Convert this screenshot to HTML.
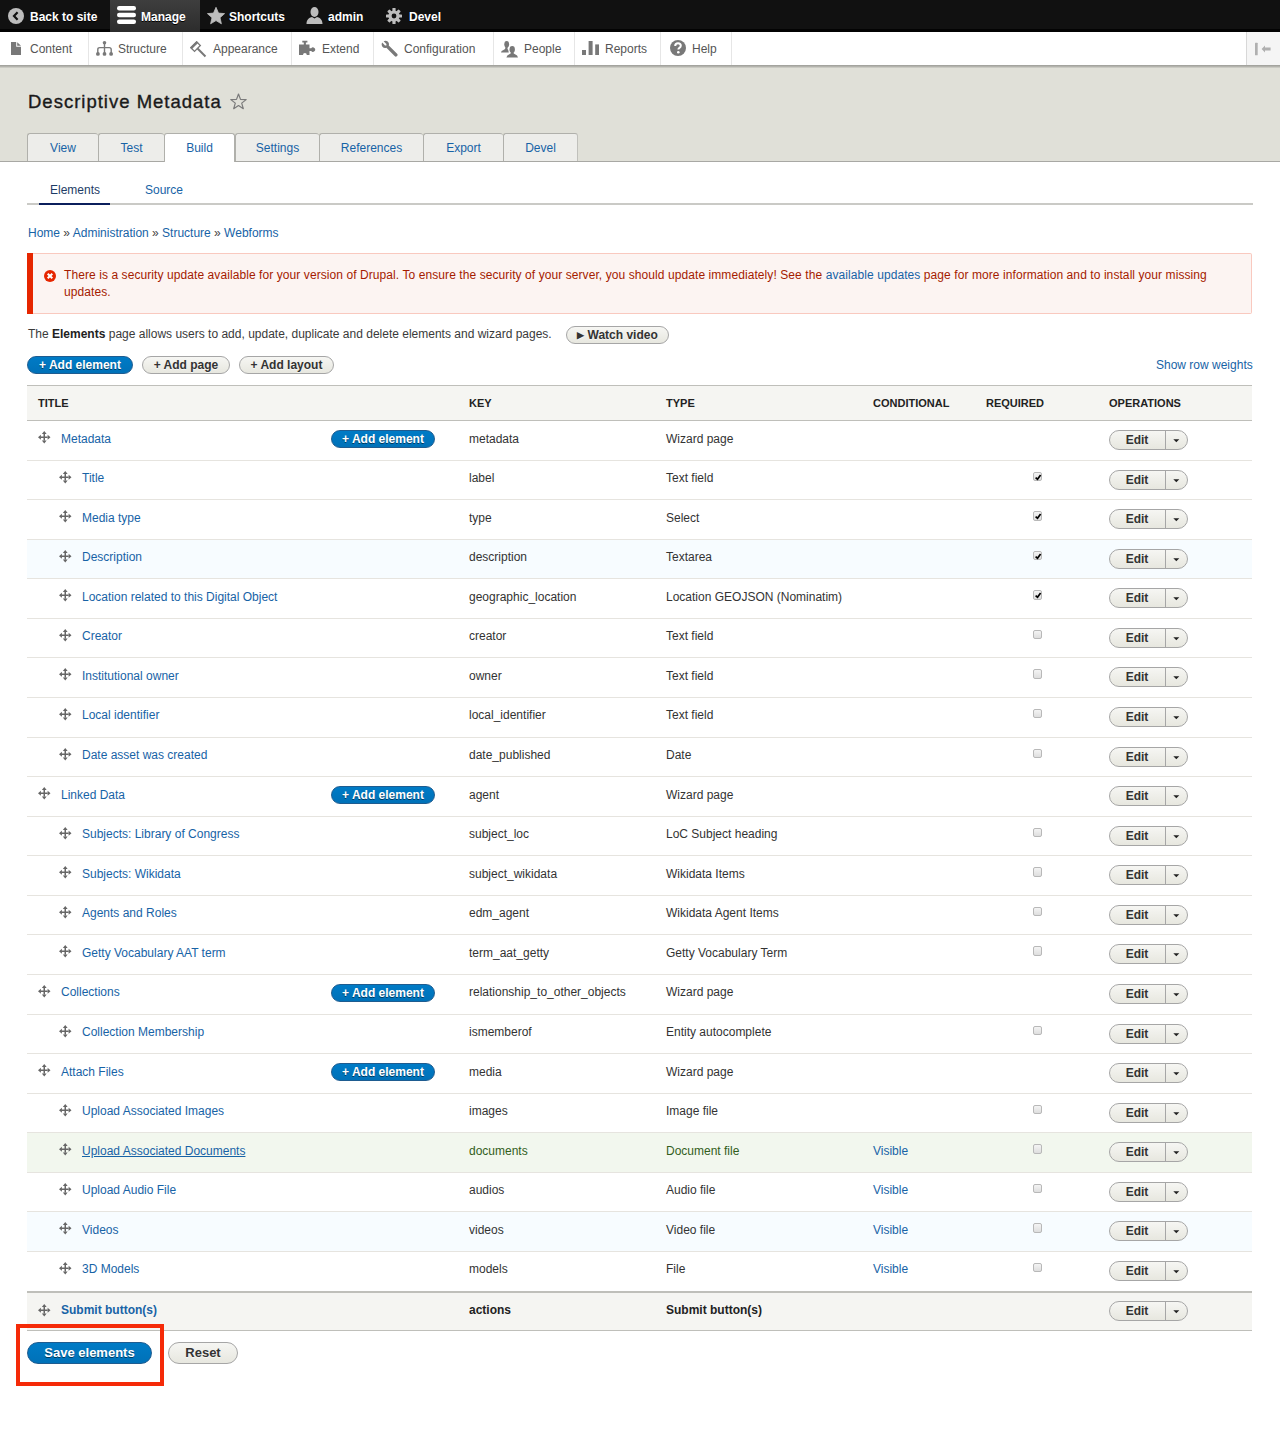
<!DOCTYPE html>
<html><head><meta charset="utf-8">
<style>
*{box-sizing:border-box;margin:0;padding:0}
html,body{width:1280px;height:1444px;overflow:hidden;background:#fff}
body{font-family:"Liberation Sans",sans-serif;font-size:13px;color:#222;position:relative}
a{color:#1763a6;text-decoration:none}
.a{position:absolute;white-space:nowrap;line-height:20px}
/* toolbar */
#bar{position:absolute;left:0;top:0;width:1280px;height:32px;background:#111;border-bottom:3px solid #030303}
#bar .tx{position:absolute;top:7px;color:#fff;font-weight:bold;font-size:12px;line-height:20px;text-shadow:0 1px 0 #000}
#bar svg{position:absolute}
#manage{position:absolute;left:110px;top:0;width:90px;height:32px;background:linear-gradient(#3e3e3e,#2c2c2c)}
#tray{position:absolute;left:0;top:32px;width:1280px;height:33px;background:#fff}
#trsh{position:absolute;left:0;top:65px;width:1280px;height:3px;background:linear-gradient(#9c9c97,#b3b3ad 50%,#d6d6ce)}
#tray .sep{position:absolute;top:0;width:1px;height:33px;background:#e6e6e6}
#tray .tx{position:absolute;top:7px;color:#555;font-size:12px;line-height:20px}
#tray svg{position:absolute}
/* header */
#hdr{position:absolute;left:0;top:66px;width:1280px;height:95px;background:#e0e0d8}
#hdrline{position:absolute;left:0;top:161px;width:1280px;height:1px;background:#a8a8a4}
h1{position:absolute;left:28px;top:90px;font-size:18.5px;letter-spacing:1px;font-weight:normal;color:#1a1a1a;line-height:24px;white-space:nowrap;-webkit-text-stroke:0.35px #1a1a1a}
.ptab{position:absolute;top:133px;height:28px;background:#ededea;border:1px solid #b0b0ab;border-bottom:none;border-right:none;border-radius:3px 3px 0 0;text-align:center;line-height:28px;color:#1763a6;font-size:12px}
.ptab.act{background:#fff;height:29px;border-right:1px solid #b0b0ab}
/* secondary tabs */
#stline{position:absolute;left:27px;top:203px;width:1226px;height:2px;background:#cacac6}
#stact{position:absolute;left:39px;top:202.5px;width:71px;height:2px;background:#0b1f5c}
/* message */
#msg{position:absolute;left:33px;top:253px;width:1219px;height:61px;background:#fcf4f2;border:1px solid #f9c9bf;border-left:none;border-radius:0 2px 2px 0}
#msgbar{position:absolute;left:27px;top:253px;width:6px;height:61px;background:#e62600}
#msgtx{position:absolute;left:64px;top:267px;width:1170px;color:#a51b00;line-height:17px;font-size:12px;letter-spacing:0.08px}
/* buttons */
.btn{position:absolute;height:18px;border-radius:20em;border:1px solid #a6a6a6;background:linear-gradient(#f6f6f3,#e7e7df);color:#333;font-weight:bold;font-size:12px;line-height:16px;text-align:center;white-space:nowrap;text-shadow:0 1px rgba(255,255,255,.6)}
.btn.pri{background:linear-gradient(#007bc6,#0071b8);border-color:#1e5c90;color:#fff;text-shadow:0 1px rgba(0,0,0,.5)}
/* table */
#thead{position:absolute;left:27px;top:385px;width:1225px;height:36px;background:#f5f5f2;border-top:1px solid #bfbfba;border-bottom:1px solid #bfbfba}
#thead span{position:absolute;top:7px;margin-left:1px;font-weight:bold;font-size:11px;line-height:20px;color:#222;text-transform:uppercase}
.row{position:absolute;left:27px;width:1225px;height:39.57px;border-bottom:1px solid #e6e4df}
.row .dg{position:absolute;top:10px;width:13px;height:13px}
.row .dg svg{display:block}
.row .tt,.row .k,.row .ty,.row .cd{position:absolute;top:7.5px;line-height:20px;white-space:nowrap;font-size:12px}
.row .k{left:442px;color:#333}
.row .ty{left:639px;color:#333}
.row .cd{left:846px}
.cb{position:absolute;left:1005.5px;width:9.5px;height:9.5px;border:1px solid #b8b8b8;border-radius:2px;background:linear-gradient(#f4f4f4,#dedede)}
.eb{position:absolute;left:1082px;width:79px;height:20px;border:1px solid #a6a6a6;border-radius:20em;background:linear-gradient(#f6f6f3,#e7e7df)}
.eb .el{position:absolute;left:0;top:0;width:54px;text-align:center;line-height:18px;font-weight:bold;font-size:12px;color:#333}
.eb .ed{position:absolute;left:54.5px;top:0;width:1px;height:18px;background:#a6a6a6}
.eb .caret{position:absolute;left:62.5px;top:8px}
#tfoot{position:absolute;left:27px;top:1290.5px;width:1225px;height:40.5px;background:#f5f5f2;border-top:2px solid #bfbfba;border-bottom:1px solid #bfbfba}
</style></head>
<body>
<div id="bar">
  <svg style="left:8px;top:8px" width="16" height="16" viewBox="0 0 16 16"><circle cx="8" cy="8" r="8" fill="#bdbdbd"/><path d="M9.6 4.2 L6 8 L9.6 11.8" stroke="#111" stroke-width="2.2" fill="none"/></svg>
  <span class="tx" style="left:30px">Back to site</span>
  <div id="manage"></div>
  <svg style="left:117px;top:6px" width="19" height="18" viewBox="0 0 19 18"><rect x="0" y="0" width="19" height="4.5" rx="2.2" fill="#fff"/><rect x="0" y="6.7" width="19" height="4.5" rx="2.2" fill="#fff"/><rect x="0" y="13.4" width="19" height="4.5" rx="2.2" fill="#fff"/></svg>
  <span class="tx" style="left:141px">Manage</span>
  <svg style="left:207px;top:7px" width="18" height="18" viewBox="0 0 18 18"><path d="M9 0.3 L11.5 6.1 L17.6 6.6 L13 10.7 L14.4 16.8 L9 13.6 L3.6 16.8 L5 10.7 L0.4 6.6 L6.5 6.1 Z" fill="#bdbdbd" stroke="#bdbdbd" stroke-width="0.8" stroke-linejoin="round"/></svg>
  <span class="tx" style="left:229px">Shortcuts</span>
  <svg style="left:306px;top:7px" width="17" height="17" viewBox="0 0 17 17"><ellipse cx="8.5" cy="5" rx="4" ry="5" fill="#bdbdbd"/><path d="M0.5 17 C0.5 12 4 10.5 6 10 L8.5 11.5 L11 10 C13 10.5 16.5 12 16.5 17 Z" fill="#bdbdbd"/></svg>
  <span class="tx" style="left:328px">admin</span>
  <svg style="left:386px;top:8px" width="16" height="16" viewBox="0 0 16 16"><g fill="#bdbdbd"><circle cx="8" cy="8" r="5.6"/><rect x="6.4" y="0" width="3.2" height="16" rx="0.6"/><rect x="0" y="6.4" width="16" height="3.2" rx="0.6"/><rect x="6.4" y="0" width="3.2" height="16" rx="0.6" transform="rotate(45 8 8)"/><rect x="6.4" y="0" width="3.2" height="16" rx="0.6" transform="rotate(-45 8 8)"/></g><circle cx="8" cy="8" r="2.4" fill="#111"/></svg>
  <span class="tx" style="left:409px">Devel</span>
</div>
<div id="tray">
  <div class="sep" style="left:88px"></div>
  <div class="sep" style="left:182px"></div>
  <div class="sep" style="left:291px"></div>
  <div class="sep" style="left:373px"></div>
  <div class="sep" style="left:493px"></div>
  <div class="sep" style="left:574px"></div>
  <div class="sep" style="left:660px"></div>
  <div class="sep" style="left:731px"></div>
  <div class="sep" style="left:1246px;background:#d8d8d8"></div>
  <div style="position:absolute;left:1247px;top:0;width:33px;height:33px;background:#f5f5f5"></div>
  <svg style="left:1255px;top:10px" width="16" height="14" viewBox="0 0 16 14"><rect x="0" y="0.7" width="2.7" height="12.5" rx="0.5" fill="#b0b0b0"/><path d="M6.6 6.9 L10 3.4 V5.4 H15.6 V8.6 H10 V10.4 Z" fill="#b0b0b0"/></svg>
  <!-- content icon -->
  <svg style="left:11px;top:10px" width="10" height="13" viewBox="0 0 10 13"><path d="M0 0 H5.2 V4.8 H10 V13 H0 Z M6.2 0.2 L10 3.8 H6.2 Z" fill="#787878"/></svg>
  <span class="tx" style="left:30px">Content</span>
  <svg style="left:96px;top:9px" width="17" height="15" viewBox="0 0 17 15"><g fill="#787878"><circle cx="8.5" cy="1.8" r="1.8"/><rect x="7.8" y="1.8" width="1.4" height="11"/><path d="M1.8 13 V8.5 Q1.8 6.6 3.8 6.6 H13.2 Q15.2 6.6 15.2 8.5 V13" stroke="#787878" stroke-width="1.4" fill="none"/><circle cx="1.9" cy="12.9" r="1.9"/><circle cx="8.5" cy="12.9" r="1.9"/><circle cx="15.1" cy="12.9" r="1.9"/></g></svg>
  <span class="tx" style="left:118px">Structure</span>
  <svg style="left:189px;top:8px" width="18" height="18" viewBox="0 0 18 18"><g transform="rotate(-45 6.6 6.6)"><rect x="2.5" y="4" width="8.2" height="5.2" fill="#fff" stroke="#787878" stroke-width="1.3"/><rect x="1.9" y="3.3" width="9.4" height="2.5" fill="#787878"/><rect x="5.6" y="9" width="2" height="11.6" fill="#787878"/></g></svg>
  <span class="tx" style="left:213px">Appearance</span>
  <svg style="left:299px;top:8px" width="17" height="16" viewBox="0 0 17 16"><path d="M3.3 0.7 H8.4 V2.4 H6.9 V4.4 H10.5 V8.3 H12.2 A2.2 2.2 0 1 1 12.2 11.1 H10.5 V15 H7.8 A1.9 1.9 0 0 0 4 15 H0 V4.4 H4.8 V2.4 H3.3 Z" fill="#787878"/></svg>
  <span class="tx" style="left:322px">Extend</span>
  <svg style="left:381px;top:8px" width="17" height="17" viewBox="0 0 17 17"><g transform="translate(17 0) scale(-1 1)"><path d="M15.8 2.6 L13 5.4 L11.6 5.4 L11.6 4 L14.4 1.2 Q12.3 0 10.3 1.4 Q8.5 3 9.2 5.4 L0.9 13.7 Q-0.2 15 1 16.1 Q2.2 17.2 3.4 16 L11.6 7.8 Q14 8.6 15.6 6.7 Q17 4.8 15.8 2.6 Z" fill="#787878"/></g></svg>
  <span class="tx" style="left:404px">Configuration</span>
  <svg style="left:500px;top:8px" width="19" height="18" viewBox="0 0 19 18"><g fill="#787878"><ellipse cx="6.7" cy="4.3" rx="2.4" ry="3.4"/><path d="M5.6 6.5 H7.6 Q7.2 9 8.2 10 L8.8 12.5 H1 Q1 10.5 3.5 10 Q5.6 9.6 5.6 6.5 Z"/><ellipse cx="12.2" cy="9.4" rx="2.7" ry="3.4"/><path d="M11 11.5 H13.4 Q13.2 13.6 15 14.3 Q17.6 15 18 17.5 H6.4 Q6.8 15 9.4 14.3 Q11.2 13.6 11 11.5 Z"/></g></svg>
  <span class="tx" style="left:524px">People</span>
  <svg style="left:582px;top:8px" width="17" height="16" viewBox="0 0 17 16"><g fill="#787878"><rect x="0" y="10" width="4" height="5"/><rect x="6.6" y="1" width="4" height="14"/><rect x="13.2" y="4.4" width="3.8" height="10.6"/></g></svg>
  <span class="tx" style="left:605px">Reports</span>
  <svg style="left:670px;top:8px" width="16" height="16" viewBox="0 0 16 16"><circle cx="8" cy="8" r="8" fill="#787878"/><path d="M5.2 6 Q5.2 3.3 8 3.3 Q10.8 3.3 10.8 5.8 Q10.8 7.2 9.2 8 Q8.4 8.5 8.4 9.6" stroke="#fff" stroke-width="2" fill="none"/><circle cx="8.3" cy="12.3" r="1.3" fill="#fff"/></svg>
  <span class="tx" style="left:692px">Help</span>
</div>
<div id="hdr"></div>
<div id="trsh"></div>
<div id="hdrline"></div>
<h1>Descriptive Metadata</h1>
<svg style="position:absolute;left:230px;top:93px" width="17" height="17" viewBox="0 0 17 17"><path d="M8.5 1 L10.5 6.4 L16.2 6.6 L11.7 10.1 L13.3 15.7 L8.5 12.5 L3.7 15.7 L5.3 10.1 L0.8 6.6 L6.5 6.4 Z" fill="none" stroke="#7a7a7a" stroke-width="1.2" stroke-linejoin="round"/></svg>
<div class="ptab" style="left:27px;width:71px">View</div>
<div class="ptab" style="left:98px;width:66px">Test</div>
<div class="ptab act" style="left:164px;width:71px">Build</div>
<div class="ptab" style="left:235px;width:84px">Settings</div>
<div class="ptab" style="left:319px;width:104px">References</div>
<div class="ptab" style="left:423px;width:80px">Export</div>
<div class="ptab" style="left:503px;width:75px;border-right:1px solid #c0c0bb">Devel</div>

<a class="a" style="left:50px;top:180px;color:#1d3c66;font-size:12px">Elements</a>
<a class="a" style="left:145px;top:180px;font-size:12px">Source</a>
<div id="stline"></div>
<div id="stact"></div>

<div class="a" style="left:28px;top:223px;font-size:12px;color:#444"><a>Home</a> » <a>Administration</a> » <a>Structure</a> » <a>Webforms</a></div>

<div id="msgbar"></div>
<div id="msg"></div>
<svg style="position:absolute;left:43.5px;top:269.5px" width="12" height="12" viewBox="0 0 12 12"><circle cx="6" cy="6" r="6" fill="#e62600"/><path d="M3.7 3.7 L8.3 8.3 M8.3 3.7 L3.7 8.3" stroke="#fff" stroke-width="2"/></svg>
<div id="msgtx">There is a security update available for your version of Drupal. To ensure the security of your server, you should update immediately! See the <a>available updates</a> page for more information and to install your missing updates.</div>

<div class="a" style="left:28px;top:324px;font-size:12px;color:#3a3a3a">The <b style="color:#222">Elements</b> page allows users to add, update, duplicate and delete elements and wizard pages.</div>
<div class="btn" style="left:566px;top:326px;width:103px"><span style="font-size:9px;position:relative;top:-1px">&#9654;</span> Watch video</div>

<div class="btn pri" style="left:27px;top:356px;width:106px">+ Add element</div>
<div class="btn" style="left:142px;top:356px;width:88px">+ Add page</div>
<div class="btn" style="left:239px;top:356px;width:95px">+ Add layout</div>
<a class="a" style="left:1156px;top:355px;font-size:12px">Show row weights</a>

<div id="thead">
  <span style="left:10px">Title</span>
  <span style="left:441px">Key</span>
  <span style="left:638px">Type</span>
  <span style="left:845px">Conditional</span>
  <span style="left:958px">Required</span>
  <span style="left:1081px">Operations</span>
</div>
<div class="row" style="top:421.0px;"><div class="dg" style="left:11px"><svg width="13" height="13" viewBox="0 0 13 13"><g fill="#666"><rect x="5.5" y="2.4" width="1.5" height="7.2"/><rect x="2.4" y="5.5" width="7.2" height="1.5"/><path d="M6.25 0 L8.65 2.9 H3.85 Z M6.25 12.5 L8.65 9.6 H3.85 Z M0 6.25 L2.9 3.85 V8.65 Z M12.5 6.25 L9.6 3.85 V8.65 Z"/></g></svg></div><a class="tt" style="left:34px">Metadata</a><div class="btn pri sm" style="left:304px;top:9px;width:104px">+ Add element</div><span class="k">metadata</span><span class="ty">Wizard page</span><div class="eb" style="top:9px"><span class="el">Edit</span><span class="ed"></span><svg class="caret" width="7" height="4" viewBox="0 0 7 4"><path d="M0.3 0.2H6.3L3.3 3.2Z" fill="#222"/></svg></div></div>
<div class="row" style="top:460.57px;"><div class="dg" style="left:32px"><svg width="13" height="13" viewBox="0 0 13 13"><g fill="#666"><rect x="5.5" y="2.4" width="1.5" height="7.2"/><rect x="2.4" y="5.5" width="7.2" height="1.5"/><path d="M6.25 0 L8.65 2.9 H3.85 Z M6.25 12.5 L8.65 9.6 H3.85 Z M0 6.25 L2.9 3.85 V8.65 Z M12.5 6.25 L9.6 3.85 V8.65 Z"/></g></svg></div><a class="tt" style="left:55px">Title</a><span class="k">label</span><span class="ty">Text field</span><div class="cb" style="top:11px"><svg width="9" height="9" viewBox="0 0 9 9" style="position:absolute;left:0;top:0"><path d="M1.6 4.6 L3.5 6.2 L6.6 2.0" stroke="#000" stroke-width="1.7" fill="none"/></svg></div><div class="eb" style="top:9px"><span class="el">Edit</span><span class="ed"></span><svg class="caret" width="7" height="4" viewBox="0 0 7 4"><path d="M0.3 0.2H6.3L3.3 3.2Z" fill="#222"/></svg></div></div>
<div class="row" style="top:500.14px;"><div class="dg" style="left:32px"><svg width="13" height="13" viewBox="0 0 13 13"><g fill="#666"><rect x="5.5" y="2.4" width="1.5" height="7.2"/><rect x="2.4" y="5.5" width="7.2" height="1.5"/><path d="M6.25 0 L8.65 2.9 H3.85 Z M6.25 12.5 L8.65 9.6 H3.85 Z M0 6.25 L2.9 3.85 V8.65 Z M12.5 6.25 L9.6 3.85 V8.65 Z"/></g></svg></div><a class="tt" style="left:55px">Media type</a><span class="k">type</span><span class="ty">Select</span><div class="cb" style="top:11px"><svg width="9" height="9" viewBox="0 0 9 9" style="position:absolute;left:0;top:0"><path d="M1.6 4.6 L3.5 6.2 L6.6 2.0" stroke="#000" stroke-width="1.7" fill="none"/></svg></div><div class="eb" style="top:9px"><span class="el">Edit</span><span class="ed"></span><svg class="caret" width="7" height="4" viewBox="0 0 7 4"><path d="M0.3 0.2H6.3L3.3 3.2Z" fill="#222"/></svg></div></div>
<div class="row" style="top:539.71px;background:#f7fcff;"><div class="dg" style="left:32px"><svg width="13" height="13" viewBox="0 0 13 13"><g fill="#666"><rect x="5.5" y="2.4" width="1.5" height="7.2"/><rect x="2.4" y="5.5" width="7.2" height="1.5"/><path d="M6.25 0 L8.65 2.9 H3.85 Z M6.25 12.5 L8.65 9.6 H3.85 Z M0 6.25 L2.9 3.85 V8.65 Z M12.5 6.25 L9.6 3.85 V8.65 Z"/></g></svg></div><a class="tt" style="left:55px">Description</a><span class="k">description</span><span class="ty">Textarea</span><div class="cb" style="top:11px"><svg width="9" height="9" viewBox="0 0 9 9" style="position:absolute;left:0;top:0"><path d="M1.6 4.6 L3.5 6.2 L6.6 2.0" stroke="#000" stroke-width="1.7" fill="none"/></svg></div><div class="eb" style="top:9px"><span class="el">Edit</span><span class="ed"></span><svg class="caret" width="7" height="4" viewBox="0 0 7 4"><path d="M0.3 0.2H6.3L3.3 3.2Z" fill="#222"/></svg></div></div>
<div class="row" style="top:579.28px;"><div class="dg" style="left:32px"><svg width="13" height="13" viewBox="0 0 13 13"><g fill="#666"><rect x="5.5" y="2.4" width="1.5" height="7.2"/><rect x="2.4" y="5.5" width="7.2" height="1.5"/><path d="M6.25 0 L8.65 2.9 H3.85 Z M6.25 12.5 L8.65 9.6 H3.85 Z M0 6.25 L2.9 3.85 V8.65 Z M12.5 6.25 L9.6 3.85 V8.65 Z"/></g></svg></div><a class="tt" style="left:55px">Location related to this Digital Object</a><span class="k">geographic_location</span><span class="ty">Location GEOJSON (Nominatim)</span><div class="cb" style="top:11px"><svg width="9" height="9" viewBox="0 0 9 9" style="position:absolute;left:0;top:0"><path d="M1.6 4.6 L3.5 6.2 L6.6 2.0" stroke="#000" stroke-width="1.7" fill="none"/></svg></div><div class="eb" style="top:9px"><span class="el">Edit</span><span class="ed"></span><svg class="caret" width="7" height="4" viewBox="0 0 7 4"><path d="M0.3 0.2H6.3L3.3 3.2Z" fill="#222"/></svg></div></div>
<div class="row" style="top:618.85px;"><div class="dg" style="left:32px"><svg width="13" height="13" viewBox="0 0 13 13"><g fill="#666"><rect x="5.5" y="2.4" width="1.5" height="7.2"/><rect x="2.4" y="5.5" width="7.2" height="1.5"/><path d="M6.25 0 L8.65 2.9 H3.85 Z M6.25 12.5 L8.65 9.6 H3.85 Z M0 6.25 L2.9 3.85 V8.65 Z M12.5 6.25 L9.6 3.85 V8.65 Z"/></g></svg></div><a class="tt" style="left:55px">Creator</a><span class="k">creator</span><span class="ty">Text field</span><div class="cb" style="top:11px"></div><div class="eb" style="top:9px"><span class="el">Edit</span><span class="ed"></span><svg class="caret" width="7" height="4" viewBox="0 0 7 4"><path d="M0.3 0.2H6.3L3.3 3.2Z" fill="#222"/></svg></div></div>
<div class="row" style="top:658.4200000000001px;"><div class="dg" style="left:32px"><svg width="13" height="13" viewBox="0 0 13 13"><g fill="#666"><rect x="5.5" y="2.4" width="1.5" height="7.2"/><rect x="2.4" y="5.5" width="7.2" height="1.5"/><path d="M6.25 0 L8.65 2.9 H3.85 Z M6.25 12.5 L8.65 9.6 H3.85 Z M0 6.25 L2.9 3.85 V8.65 Z M12.5 6.25 L9.6 3.85 V8.65 Z"/></g></svg></div><a class="tt" style="left:55px">Institutional owner</a><span class="k">owner</span><span class="ty">Text field</span><div class="cb" style="top:11px"></div><div class="eb" style="top:9px"><span class="el">Edit</span><span class="ed"></span><svg class="caret" width="7" height="4" viewBox="0 0 7 4"><path d="M0.3 0.2H6.3L3.3 3.2Z" fill="#222"/></svg></div></div>
<div class="row" style="top:697.99px;"><div class="dg" style="left:32px"><svg width="13" height="13" viewBox="0 0 13 13"><g fill="#666"><rect x="5.5" y="2.4" width="1.5" height="7.2"/><rect x="2.4" y="5.5" width="7.2" height="1.5"/><path d="M6.25 0 L8.65 2.9 H3.85 Z M6.25 12.5 L8.65 9.6 H3.85 Z M0 6.25 L2.9 3.85 V8.65 Z M12.5 6.25 L9.6 3.85 V8.65 Z"/></g></svg></div><a class="tt" style="left:55px">Local identifier</a><span class="k">local_identifier</span><span class="ty">Text field</span><div class="cb" style="top:11px"></div><div class="eb" style="top:9px"><span class="el">Edit</span><span class="ed"></span><svg class="caret" width="7" height="4" viewBox="0 0 7 4"><path d="M0.3 0.2H6.3L3.3 3.2Z" fill="#222"/></svg></div></div>
<div class="row" style="top:737.56px;"><div class="dg" style="left:32px"><svg width="13" height="13" viewBox="0 0 13 13"><g fill="#666"><rect x="5.5" y="2.4" width="1.5" height="7.2"/><rect x="2.4" y="5.5" width="7.2" height="1.5"/><path d="M6.25 0 L8.65 2.9 H3.85 Z M6.25 12.5 L8.65 9.6 H3.85 Z M0 6.25 L2.9 3.85 V8.65 Z M12.5 6.25 L9.6 3.85 V8.65 Z"/></g></svg></div><a class="tt" style="left:55px">Date asset was created</a><span class="k">date_published</span><span class="ty">Date</span><div class="cb" style="top:11px"></div><div class="eb" style="top:9px"><span class="el">Edit</span><span class="ed"></span><svg class="caret" width="7" height="4" viewBox="0 0 7 4"><path d="M0.3 0.2H6.3L3.3 3.2Z" fill="#222"/></svg></div></div>
<div class="row" style="top:777.13px;"><div class="dg" style="left:11px"><svg width="13" height="13" viewBox="0 0 13 13"><g fill="#666"><rect x="5.5" y="2.4" width="1.5" height="7.2"/><rect x="2.4" y="5.5" width="7.2" height="1.5"/><path d="M6.25 0 L8.65 2.9 H3.85 Z M6.25 12.5 L8.65 9.6 H3.85 Z M0 6.25 L2.9 3.85 V8.65 Z M12.5 6.25 L9.6 3.85 V8.65 Z"/></g></svg></div><a class="tt" style="left:34px">Linked Data</a><div class="btn pri sm" style="left:304px;top:9px;width:104px">+ Add element</div><span class="k">agent</span><span class="ty">Wizard page</span><div class="eb" style="top:9px"><span class="el">Edit</span><span class="ed"></span><svg class="caret" width="7" height="4" viewBox="0 0 7 4"><path d="M0.3 0.2H6.3L3.3 3.2Z" fill="#222"/></svg></div></div>
<div class="row" style="top:816.7px;"><div class="dg" style="left:32px"><svg width="13" height="13" viewBox="0 0 13 13"><g fill="#666"><rect x="5.5" y="2.4" width="1.5" height="7.2"/><rect x="2.4" y="5.5" width="7.2" height="1.5"/><path d="M6.25 0 L8.65 2.9 H3.85 Z M6.25 12.5 L8.65 9.6 H3.85 Z M0 6.25 L2.9 3.85 V8.65 Z M12.5 6.25 L9.6 3.85 V8.65 Z"/></g></svg></div><a class="tt" style="left:55px">Subjects: Library of Congress</a><span class="k">subject_loc</span><span class="ty">LoC Subject heading</span><div class="cb" style="top:11px"></div><div class="eb" style="top:9px"><span class="el">Edit</span><span class="ed"></span><svg class="caret" width="7" height="4" viewBox="0 0 7 4"><path d="M0.3 0.2H6.3L3.3 3.2Z" fill="#222"/></svg></div></div>
<div class="row" style="top:856.27px;"><div class="dg" style="left:32px"><svg width="13" height="13" viewBox="0 0 13 13"><g fill="#666"><rect x="5.5" y="2.4" width="1.5" height="7.2"/><rect x="2.4" y="5.5" width="7.2" height="1.5"/><path d="M6.25 0 L8.65 2.9 H3.85 Z M6.25 12.5 L8.65 9.6 H3.85 Z M0 6.25 L2.9 3.85 V8.65 Z M12.5 6.25 L9.6 3.85 V8.65 Z"/></g></svg></div><a class="tt" style="left:55px">Subjects: Wikidata</a><span class="k">subject_wikidata</span><span class="ty">Wikidata Items</span><div class="cb" style="top:11px"></div><div class="eb" style="top:9px"><span class="el">Edit</span><span class="ed"></span><svg class="caret" width="7" height="4" viewBox="0 0 7 4"><path d="M0.3 0.2H6.3L3.3 3.2Z" fill="#222"/></svg></div></div>
<div class="row" style="top:895.84px;"><div class="dg" style="left:32px"><svg width="13" height="13" viewBox="0 0 13 13"><g fill="#666"><rect x="5.5" y="2.4" width="1.5" height="7.2"/><rect x="2.4" y="5.5" width="7.2" height="1.5"/><path d="M6.25 0 L8.65 2.9 H3.85 Z M6.25 12.5 L8.65 9.6 H3.85 Z M0 6.25 L2.9 3.85 V8.65 Z M12.5 6.25 L9.6 3.85 V8.65 Z"/></g></svg></div><a class="tt" style="left:55px">Agents and Roles</a><span class="k">edm_agent</span><span class="ty">Wikidata Agent Items</span><div class="cb" style="top:11px"></div><div class="eb" style="top:9px"><span class="el">Edit</span><span class="ed"></span><svg class="caret" width="7" height="4" viewBox="0 0 7 4"><path d="M0.3 0.2H6.3L3.3 3.2Z" fill="#222"/></svg></div></div>
<div class="row" style="top:935.41px;"><div class="dg" style="left:32px"><svg width="13" height="13" viewBox="0 0 13 13"><g fill="#666"><rect x="5.5" y="2.4" width="1.5" height="7.2"/><rect x="2.4" y="5.5" width="7.2" height="1.5"/><path d="M6.25 0 L8.65 2.9 H3.85 Z M6.25 12.5 L8.65 9.6 H3.85 Z M0 6.25 L2.9 3.85 V8.65 Z M12.5 6.25 L9.6 3.85 V8.65 Z"/></g></svg></div><a class="tt" style="left:55px">Getty Vocabulary AAT term</a><span class="k">term_aat_getty</span><span class="ty">Getty Vocabulary Term</span><div class="cb" style="top:11px"></div><div class="eb" style="top:9px"><span class="el">Edit</span><span class="ed"></span><svg class="caret" width="7" height="4" viewBox="0 0 7 4"><path d="M0.3 0.2H6.3L3.3 3.2Z" fill="#222"/></svg></div></div>
<div class="row" style="top:974.98px;"><div class="dg" style="left:11px"><svg width="13" height="13" viewBox="0 0 13 13"><g fill="#666"><rect x="5.5" y="2.4" width="1.5" height="7.2"/><rect x="2.4" y="5.5" width="7.2" height="1.5"/><path d="M6.25 0 L8.65 2.9 H3.85 Z M6.25 12.5 L8.65 9.6 H3.85 Z M0 6.25 L2.9 3.85 V8.65 Z M12.5 6.25 L9.6 3.85 V8.65 Z"/></g></svg></div><a class="tt" style="left:34px">Collections</a><div class="btn pri sm" style="left:304px;top:9px;width:104px">+ Add element</div><span class="k">relationship_to_other_objects</span><span class="ty">Wizard page</span><div class="eb" style="top:9px"><span class="el">Edit</span><span class="ed"></span><svg class="caret" width="7" height="4" viewBox="0 0 7 4"><path d="M0.3 0.2H6.3L3.3 3.2Z" fill="#222"/></svg></div></div>
<div class="row" style="top:1014.55px;"><div class="dg" style="left:32px"><svg width="13" height="13" viewBox="0 0 13 13"><g fill="#666"><rect x="5.5" y="2.4" width="1.5" height="7.2"/><rect x="2.4" y="5.5" width="7.2" height="1.5"/><path d="M6.25 0 L8.65 2.9 H3.85 Z M6.25 12.5 L8.65 9.6 H3.85 Z M0 6.25 L2.9 3.85 V8.65 Z M12.5 6.25 L9.6 3.85 V8.65 Z"/></g></svg></div><a class="tt" style="left:55px">Collection Membership</a><span class="k">ismemberof</span><span class="ty">Entity autocomplete</span><div class="cb" style="top:11px"></div><div class="eb" style="top:9px"><span class="el">Edit</span><span class="ed"></span><svg class="caret" width="7" height="4" viewBox="0 0 7 4"><path d="M0.3 0.2H6.3L3.3 3.2Z" fill="#222"/></svg></div></div>
<div class="row" style="top:1054.12px;"><div class="dg" style="left:11px"><svg width="13" height="13" viewBox="0 0 13 13"><g fill="#666"><rect x="5.5" y="2.4" width="1.5" height="7.2"/><rect x="2.4" y="5.5" width="7.2" height="1.5"/><path d="M6.25 0 L8.65 2.9 H3.85 Z M6.25 12.5 L8.65 9.6 H3.85 Z M0 6.25 L2.9 3.85 V8.65 Z M12.5 6.25 L9.6 3.85 V8.65 Z"/></g></svg></div><a class="tt" style="left:34px">Attach Files</a><div class="btn pri sm" style="left:304px;top:9px;width:104px">+ Add element</div><span class="k">media</span><span class="ty">Wizard page</span><div class="eb" style="top:9px"><span class="el">Edit</span><span class="ed"></span><svg class="caret" width="7" height="4" viewBox="0 0 7 4"><path d="M0.3 0.2H6.3L3.3 3.2Z" fill="#222"/></svg></div></div>
<div class="row" style="top:1093.69px;"><div class="dg" style="left:32px"><svg width="13" height="13" viewBox="0 0 13 13"><g fill="#666"><rect x="5.5" y="2.4" width="1.5" height="7.2"/><rect x="2.4" y="5.5" width="7.2" height="1.5"/><path d="M6.25 0 L8.65 2.9 H3.85 Z M6.25 12.5 L8.65 9.6 H3.85 Z M0 6.25 L2.9 3.85 V8.65 Z M12.5 6.25 L9.6 3.85 V8.65 Z"/></g></svg></div><a class="tt" style="left:55px">Upload Associated Images</a><span class="k">images</span><span class="ty">Image file</span><div class="cb" style="top:11px"></div><div class="eb" style="top:9px"><span class="el">Edit</span><span class="ed"></span><svg class="caret" width="7" height="4" viewBox="0 0 7 4"><path d="M0.3 0.2H6.3L3.3 3.2Z" fill="#222"/></svg></div></div>
<div class="row" style="top:1133.26px;background:#f2f7ee;"><div class="dg" style="left:32px"><svg width="13" height="13" viewBox="0 0 13 13"><g fill="#666"><rect x="5.5" y="2.4" width="1.5" height="7.2"/><rect x="2.4" y="5.5" width="7.2" height="1.5"/><path d="M6.25 0 L8.65 2.9 H3.85 Z M6.25 12.5 L8.65 9.6 H3.85 Z M0 6.25 L2.9 3.85 V8.65 Z M12.5 6.25 L9.6 3.85 V8.65 Z"/></g></svg></div><a class="tt" style="text-decoration:underline;left:55px">Upload Associated Documents</a><span class="k" style="color:#325e1c">documents</span><span class="ty" style="color:#325e1c">Document file</span><a class="cd">Visible</a><div class="cb" style="top:11px"></div><div class="eb" style="top:9px"><span class="el">Edit</span><span class="ed"></span><svg class="caret" width="7" height="4" viewBox="0 0 7 4"><path d="M0.3 0.2H6.3L3.3 3.2Z" fill="#222"/></svg></div></div>
<div class="row" style="top:1172.83px;"><div class="dg" style="left:32px"><svg width="13" height="13" viewBox="0 0 13 13"><g fill="#666"><rect x="5.5" y="2.4" width="1.5" height="7.2"/><rect x="2.4" y="5.5" width="7.2" height="1.5"/><path d="M6.25 0 L8.65 2.9 H3.85 Z M6.25 12.5 L8.65 9.6 H3.85 Z M0 6.25 L2.9 3.85 V8.65 Z M12.5 6.25 L9.6 3.85 V8.65 Z"/></g></svg></div><a class="tt" style="left:55px">Upload Audio File</a><span class="k">audios</span><span class="ty">Audio file</span><a class="cd">Visible</a><div class="cb" style="top:11px"></div><div class="eb" style="top:9px"><span class="el">Edit</span><span class="ed"></span><svg class="caret" width="7" height="4" viewBox="0 0 7 4"><path d="M0.3 0.2H6.3L3.3 3.2Z" fill="#222"/></svg></div></div>
<div class="row" style="top:1212.4px;background:#f7fcff;"><div class="dg" style="left:32px"><svg width="13" height="13" viewBox="0 0 13 13"><g fill="#666"><rect x="5.5" y="2.4" width="1.5" height="7.2"/><rect x="2.4" y="5.5" width="7.2" height="1.5"/><path d="M6.25 0 L8.65 2.9 H3.85 Z M6.25 12.5 L8.65 9.6 H3.85 Z M0 6.25 L2.9 3.85 V8.65 Z M12.5 6.25 L9.6 3.85 V8.65 Z"/></g></svg></div><a class="tt" style="left:55px">Videos</a><span class="k">videos</span><span class="ty">Video file</span><a class="cd">Visible</a><div class="cb" style="top:11px"></div><div class="eb" style="top:9px"><span class="el">Edit</span><span class="ed"></span><svg class="caret" width="7" height="4" viewBox="0 0 7 4"><path d="M0.3 0.2H6.3L3.3 3.2Z" fill="#222"/></svg></div></div>
<div class="row" style="top:1251.97px;"><div class="dg" style="left:32px"><svg width="13" height="13" viewBox="0 0 13 13"><g fill="#666"><rect x="5.5" y="2.4" width="1.5" height="7.2"/><rect x="2.4" y="5.5" width="7.2" height="1.5"/><path d="M6.25 0 L8.65 2.9 H3.85 Z M6.25 12.5 L8.65 9.6 H3.85 Z M0 6.25 L2.9 3.85 V8.65 Z M12.5 6.25 L9.6 3.85 V8.65 Z"/></g></svg></div><a class="tt" style="left:55px">3D Models</a><span class="k">models</span><span class="ty">File</span><a class="cd">Visible</a><div class="cb" style="top:11px"></div><div class="eb" style="top:9px"><span class="el">Edit</span><span class="ed"></span><svg class="caret" width="7" height="4" viewBox="0 0 7 4"><path d="M0.3 0.2H6.3L3.3 3.2Z" fill="#222"/></svg></div></div>
<div id="tfoot">
  <div class="dg" style="position:absolute;left:11px;top:11px"><svg width="13" height="13" viewBox="0 0 13 13"><g fill="#666"><rect x="5.5" y="2.4" width="1.5" height="7.2"/><rect x="2.4" y="5.5" width="7.2" height="1.5"/><path d="M6.25 0 L8.65 2.9 H3.85 Z M6.25 12.5 L8.65 9.6 H3.85 Z M0 6.25 L2.9 3.85 V8.65 Z M12.5 6.25 L9.6 3.85 V8.65 Z"/></g></svg></div>
  <a class="a" style="left:34px;top:7px;font-weight:bold;font-size:12px">Submit button(s)</a>
  <span class="a" style="left:442px;top:7px;font-weight:bold;font-size:12px">actions</span>
  <span class="a" style="left:639px;top:7px;font-weight:bold;font-size:12px">Submit button(s)</span>
  <div class="eb" style="top:8px"><span class="el">Edit</span><span class="ed"></span><svg class="caret" width="7" height="4" viewBox="0 0 7 4"><path d="M0.3 0.2H6.3L3.3 3.2Z" fill="#222"/></svg></div>
</div>

<div class="btn pri" style="left:27px;top:1342px;width:125px;height:22px;line-height:20px;font-size:13px">Save elements</div>
<div class="btn" style="left:168px;top:1342px;width:70px;height:22px;line-height:20px;font-size:13px">Reset</div>
<div style="position:absolute;left:16px;top:1324px;width:148px;height:62px;border:4.3px solid #f52a08"></div>
</body></html>
